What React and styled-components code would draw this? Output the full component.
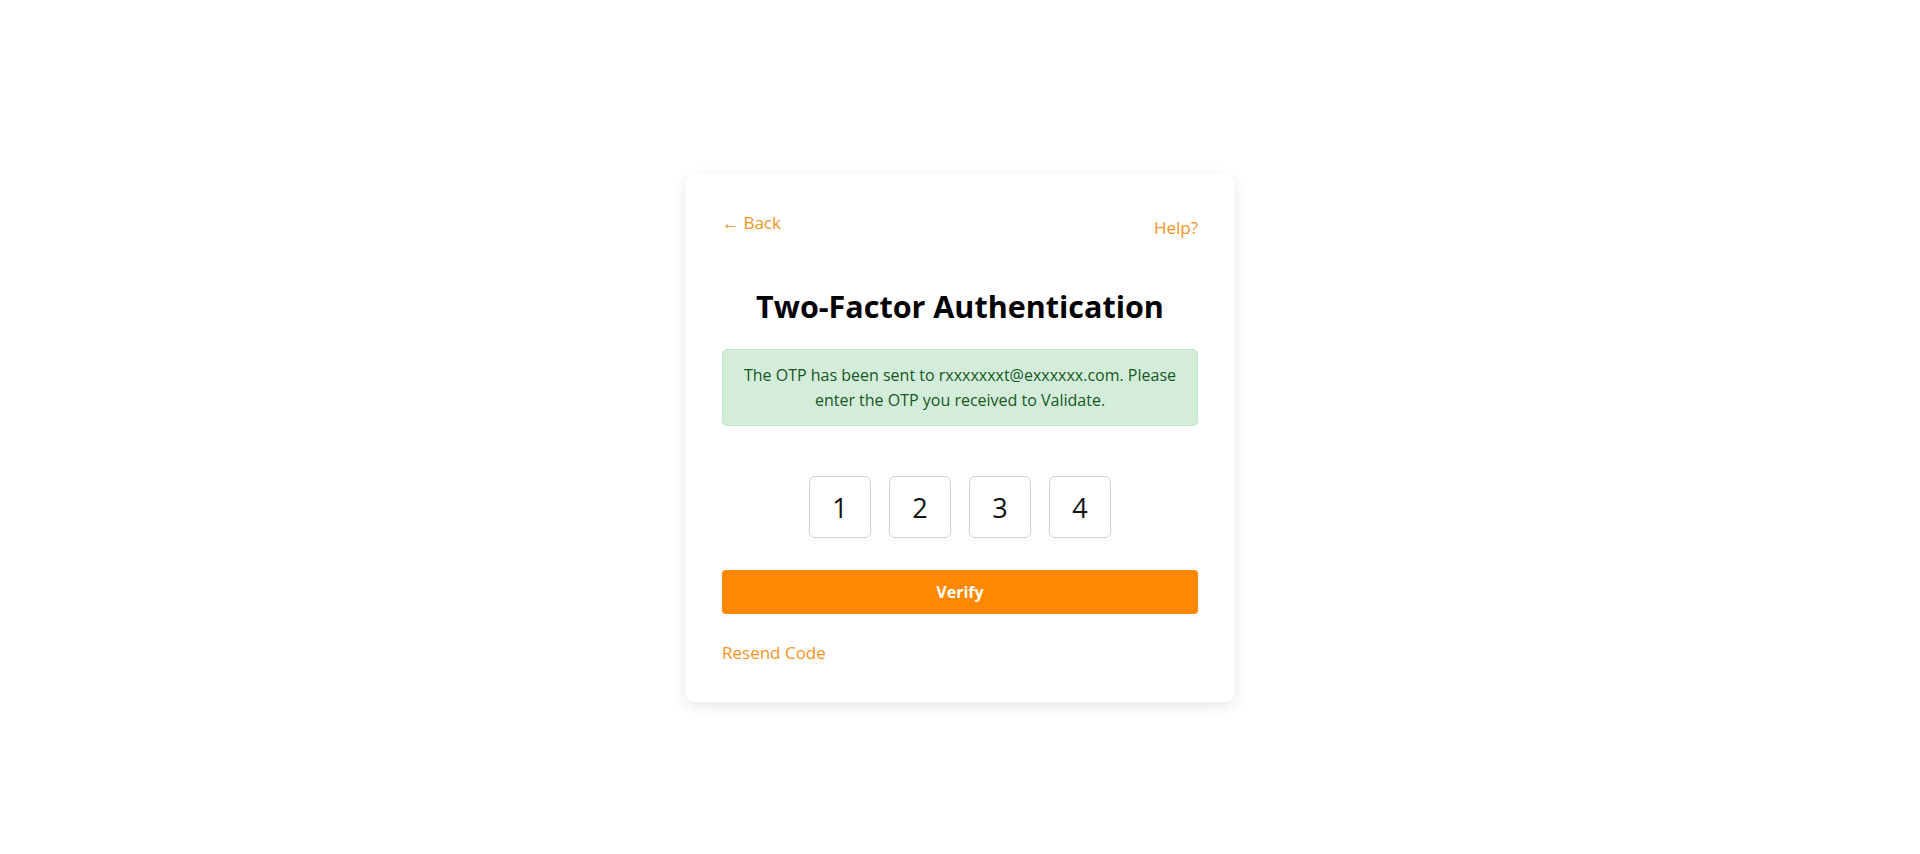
import React from "react";
import styled, { createGlobalStyle } from "styled-components";

const GlobalStyle = createGlobalStyle`
    body {
        margin: 0;
        background: #fff;
        font-family: "Segoe UI", "Open Sans", "Noto Sans", sans-serif;
        color: #111;
    }
`

const Page = styled.div`
    min-height: 100vh;
    display: flex;
    justify-content: center;
    align-items: flex-start;
    padding-top: 174px;
    box-sizing: border-box;
`

const Card = styled.div`
    width: 550px;
    box-sizing: border-box;
    padding: 37px 37px 37px;
    background: #fff;
    border-radius: 10px;
    box-shadow: 0 4px 14px rgba(0, 0, 0, 0.1);
`

const TopRow = styled.div`
    display: flex;
    justify-content: space-between;
    align-items: flex-start;
`

const TextLink = styled.a`
    color: #f39322;
    font-size: 17px;
    line-height: 24px;
    text-decoration: none;
    cursor: pointer;
    margin-top: ${(p) => p.$offset || 0}px;
`

const Title = styled.h1`
    margin: 46px 0 0;
    font-size: 30.5px;
    line-height: 40px;
    font-weight: 700;
    text-align: center;
    color: #000;
`

const Alert = styled.div`
    margin-top: 23px;
    padding: 13px 16px;
    border: 1px solid #c3e6cb;
    border-radius: 5px;
    background: #d4edda;
    color: #155724;
    font-size: 16px;
    line-height: 24.5px;
    text-align: center;
`

const OtpRow = styled.div`
    margin-top: 50px;
    display: flex;
    justify-content: center;
    gap: 18px;
`

const OtpInput = styled.input`
    width: 62px;
    height: 62px;
    box-sizing: border-box;
    border: 1px solid #d0d0d0;
    border-radius: 6px;
    background: #fff;
    text-align: center;
    font-family: inherit;
    font-size: 27px;
    color: #111;
    padding: 0;
    outline: none;
`

const VerifyButton = styled.button`
    display: block;
    width: 100%;
    height: 44px;
    margin-top: 32px;
    border: none;
    border-radius: 4px;
    background: #ff8800;
    color: #fff;
    font-family: inherit;
    font-size: 16px;
    font-weight: 700;
    cursor: pointer;
`

const Footer = styled.div`
    margin-top: 27px;
`

export default function App() {
    const digits = ['1', '2', '3', '4']

    return (
        <>
            <GlobalStyle />
            <Page>
                <Card>
                    <TopRow>
                        <TextLink>← Back</TextLink>
                        <TextLink $offset={5}>Help?</TextLink>
                    </TopRow>
                    <Title>Two-Factor Authentication</Title>
                    <Alert>
                        The OTP has been sent to rxxxxxxxt@exxxxxx.com. Please enter the OTP you received to Validate.
                    </Alert>
                    <OtpRow>
                        {digits.map((d, i) => (
                            <OtpInput key={i} defaultValue={d} maxLength={1} />
                        ))}
                    </OtpRow>
                    <VerifyButton>Verify</VerifyButton>
                    <Footer>
                        <TextLink>Resend Code</TextLink>
                    </Footer>
                </Card>
            </Page>
        </>
    )
}
